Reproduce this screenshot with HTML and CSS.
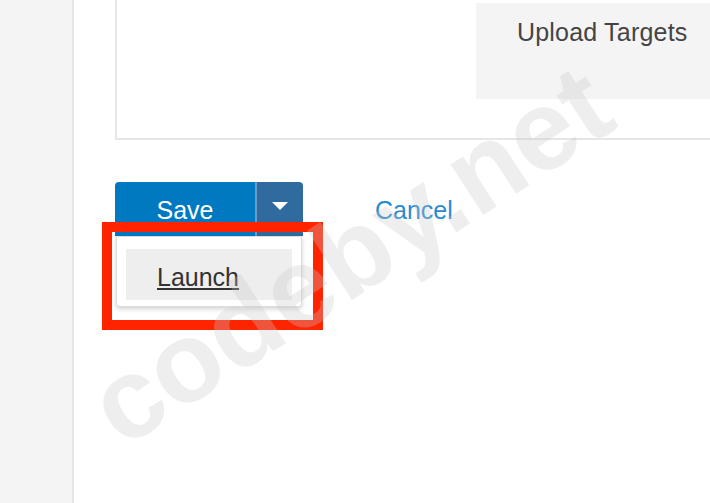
FILE: index.html
```html
<!DOCTYPE html>
<html lang="en">
<head>
    <meta charset="UTF-8">
    <meta name="viewport" content="width=device-width, initial-scale=1.0">
    <title>Scan Settings</title>
    <link rel="stylesheet" href="styles.css">
</head>
<body>
    <div class="layout">
        <aside class="sidebar"></aside>

        <main class="content">
            <section class="panel">
                <div class="panel-main"></div>
                <div class="panel-side">
                    <div class="targets">Upload Targets</div>
                </div>
            </section>

            <div class="actions">
                <div class="split-btn">
                    <button class="btn-save">Save</button>
                    <button class="btn-caret"><span class="caret"></span></button>

                    <!-- open dropdown -->
                    <div class="dropdown">
                        <a href="#" class="dropdown-item">Launch</a>
                    </div>

                    <!-- annotation frame -->
                    <div class="highlight"></div>
                </div>
                <a href="#" class="cancel">Cancel</a>
            </div>
        </main>
    </div>

    <div class="watermark">codeby.net</div>
</body>
</html>
```

FILE: styles.css
```css
html, body {
    margin: 0;
    padding: 0;
    height: 100%;
    overflow: hidden;
}
body {
    font-family: "Liberation Sans", Arial, sans-serif;
    font-size: 25px;
    background-color: #fff;
    color: #333;
    position: relative;
}
.layout {
    display: flex;
    height: 100vh;
}
.sidebar {
    width: 72px;
    flex-shrink: 0;
    background-color: #f4f4f4;
    border-right: 2px solid #e6e6e6;
}
.content {
    flex: 1;
    min-width: 0;
    overflow: hidden;
    padding-left: 41px;
}
.panel {
    width: 700px;
    height: 140px;
    box-sizing: border-box;
    border-left: 2px solid #e6e6e6;
    border-bottom: 2px solid #e6e6e6;
    display: grid;
    grid-template-columns: 359px 1fr;
}
.panel-side {
    padding-top: 3px;
}
.targets {
    height: 96px;
    box-sizing: border-box;
    background-color: #f4f4f4;
    padding: 14px 0 0 41px;
    line-height: 30px;
    letter-spacing: 0.2px;
    color: #444;
}
.actions {
    margin-top: 42px;
    display: flex;
    align-items: flex-start;
}
.split-btn {
    position: relative;
    display: flex;
}
.split-btn button {
    font-family: inherit;
    font-size: 25px;
    line-height: 30px;
    color: #fff;
    border: none;
    margin: 0;
    height: 54px;
    cursor: pointer;
}
.btn-save {
    width: 140px;
    padding: 13px 0 11px;
    background-color: #0079c1;
    border-radius: 4px 0 0 0;
}
.btn-caret {
    width: 48px;
    padding: 0;
    background-color: #2f6b9f;
    border-left: 2px solid #6b9bc6 !important;
    border-radius: 0 4px 0 0;
    display: flex;
    align-items: center;
    justify-content: center;
}
.caret {
    display: block;
    width: 0;
    height: 0;
    margin-top: -6px;
    border-left: 8px solid transparent;
    border-right: 8px solid transparent;
    border-top: 8px solid #fff;
}
.dropdown {
    position: absolute;
    left: 1px;
    top: 54px;
    width: 186px;
    box-sizing: border-box;
    background: #fff;
    border: 1px solid #dcdcdc;
    border-radius: 0 0 3px 3px;
    box-shadow: 0 2px 5px rgba(0,0,0,0.18);
    padding: 12px 9px 6px;
}
.dropdown-item {
    display: block;
    background-color: #eeeeee;
    color: #333;
    text-decoration: underline;
    line-height: 30px;
    padding: 13px 0 8px 31px;
}
.highlight {
    position: absolute;
    left: -13px;
    top: 40px;
    width: 221px;
    height: 108px;
    box-sizing: border-box;
    border: 10px solid #ff2400;
}
.cancel {
    margin-left: 72px;
    padding-top: 13px;
    line-height: 30px;
    color: #2b8ad2;
    text-decoration: none;
}
.watermark {
    position: absolute;
    left: 350px;
    top: 255px;
    transform: translate(-50%, -50%) rotate(-33deg);
    font-family: "Liberation Sans", Arial, sans-serif;
    font-weight: bold;
    font-size: 114px;
    line-height: 1;
    white-space: nowrap;
    color: rgba(200,200,200,0.3);
    pointer-events: none;
}
```
